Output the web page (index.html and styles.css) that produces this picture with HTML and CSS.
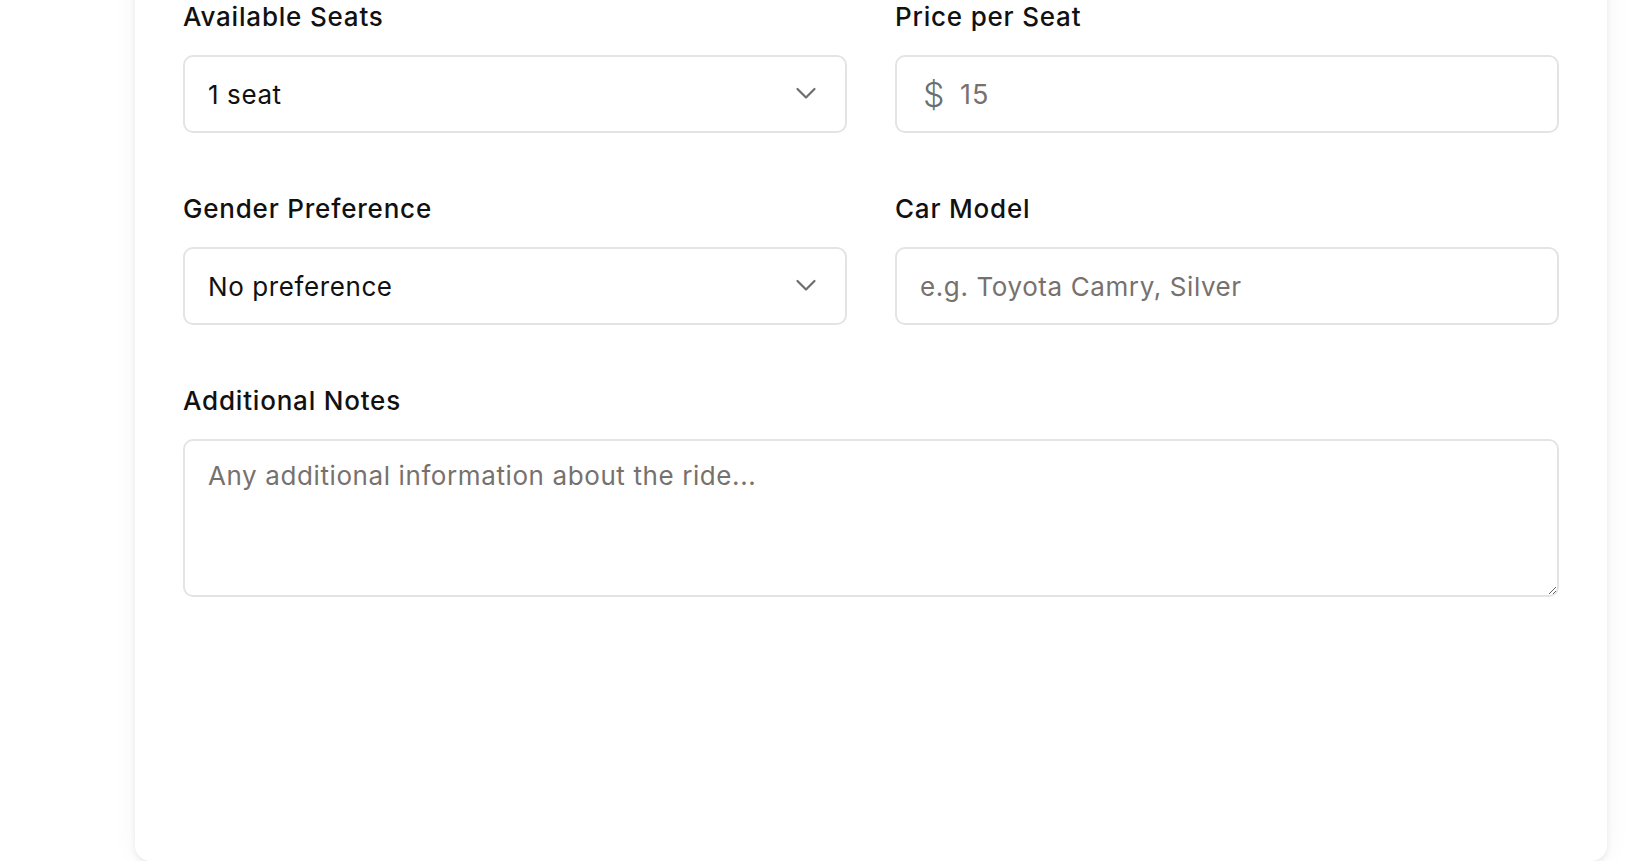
FILE: index.html
```html
<!DOCTYPE html>
<html lang="en">
<head>
<meta charset="utf-8">
<title>Offer a Ride</title>
<link rel="stylesheet" href="styles.css">
</head>
<body>
<div class="page">
  <div class="card">
    <form class="form">
      <div class="grid">
        <div class="field">
          <label class="label" for="seats">Available Seats</label>
          <div class="select-wrap">
            <select id="seats" class="control select">
              <option>1 seat</option>
              <option>2 seats</option>
              <option>3 seats</option>
              <option>4 seats</option>
            </select>
            <svg class="chevron" width="22" height="22" viewBox="0 0 22 22" fill="none" stroke="currentColor" stroke-width="2.2" stroke-linecap="round" stroke-linejoin="round"><path d="M2.5 7l8.5 8.5 8.5-8.5"/></svg>
          </div>
        </div>
        <div class="field">
          <label class="label" for="price">Price per Seat</label>
          <div class="control affix">
            <span class="prefix">$</span>
            <input id="price" class="bare" type="text" placeholder="15">
          </div>
        </div>
        <div class="field">
          <label class="label" for="gender">Gender Preference</label>
          <div class="select-wrap">
            <select id="gender" class="control select">
              <option>No preference</option>
              <option>Women only</option>
              <option>Men only</option>
            </select>
            <svg class="chevron" width="22" height="22" viewBox="0 0 22 22" fill="none" stroke="currentColor" stroke-width="2.2" stroke-linecap="round" stroke-linejoin="round"><path d="M2.5 7l8.5 8.5 8.5-8.5"/></svg>
          </div>
        </div>
        <div class="field">
          <label class="label" for="car">Car Model</label>
          <input id="car" class="control text" type="text" placeholder="e.g. Toyota Camry, Silver">
        </div>
      </div>
      <div class="field notes">
        <label class="label" for="notes">Additional Notes</label>
        <textarea id="notes" class="control area" placeholder="Any additional information about the ride..."></textarea>
      </div>
    </form>
  </div>
</div>
</body>
</html>
```

FILE: styles.css
```css
* {
  box-sizing: border-box;
}

html {
  overflow: hidden;
  background: #ffffff;
}

body {
  margin: 0;
  padding: 0;
  font-family: Inter, "Noto Sans", "Liberation Sans", sans-serif;
  color: #111111;
}

.page {
  display: flow-root;
  width: 1630px;
  padding-left: 135px;
}

.card {
  width: 1472px;
  margin-top: -49px;
  padding: 48px 48px 264px;
  background: #ffffff;
  border-radius: 16px;
  box-shadow: 0 3px 6px rgba(0, 0, 0, 0.07), 0 0 28px rgba(0, 0, 0, 0.045);
}

.grid {
  display: grid;
  grid-template-columns: 1fr 1fr;
  column-gap: 48px;
  row-gap: 58px;
}

.field {
  display: flex;
  flex-direction: column;
}

.notes {
  margin-top: 58px;
}

.label {
  font-size: 26px;
  line-height: 36px;
  font-weight: 500;
  letter-spacing: 0.8px;
  color: #111111;
  margin-bottom: 20px;
}

.control {
  width: 100%;
  height: 78px;
  border: 2px solid #e4e4e4;
  border-radius: 10px;
  background: #ffffff;
  font-family: inherit;
  font-size: 26px;
  letter-spacing: 0.6px;
  color: #111111;
  outline: none;
}

.select-wrap {
  position: relative;
}

.select {
  appearance: none;
  -webkit-appearance: none;
  padding: 0 60px 0 23px;
}

.chevron {
  position: absolute;
  right: 30px;
  top: 27px;
  color: #6e6e6e;
  pointer-events: none;
}

.text {
  padding: 0 23px;
}

.text::placeholder,
.bare::placeholder,
.area::placeholder {
  color: #77716e;
  opacity: 1;
}

.affix {
  display: flex;
  align-items: center;
  padding: 0 23px 0 26px;
}

.prefix {
  font-size: 34px;
  font-weight: 300;
  color: #6e6e6e;
  margin-right: 15px;
}

.bare {
  flex: 1;
  border: 0;
  outline: none;
  padding: 0;
  font-family: inherit;
  font-size: 27px;
  letter-spacing: 0.8px;
  color: #111111;
  background: transparent;
}

.area {
  height: 158px;
  padding: 17px 23px;
  line-height: 36px;
  resize: vertical;
}
```
